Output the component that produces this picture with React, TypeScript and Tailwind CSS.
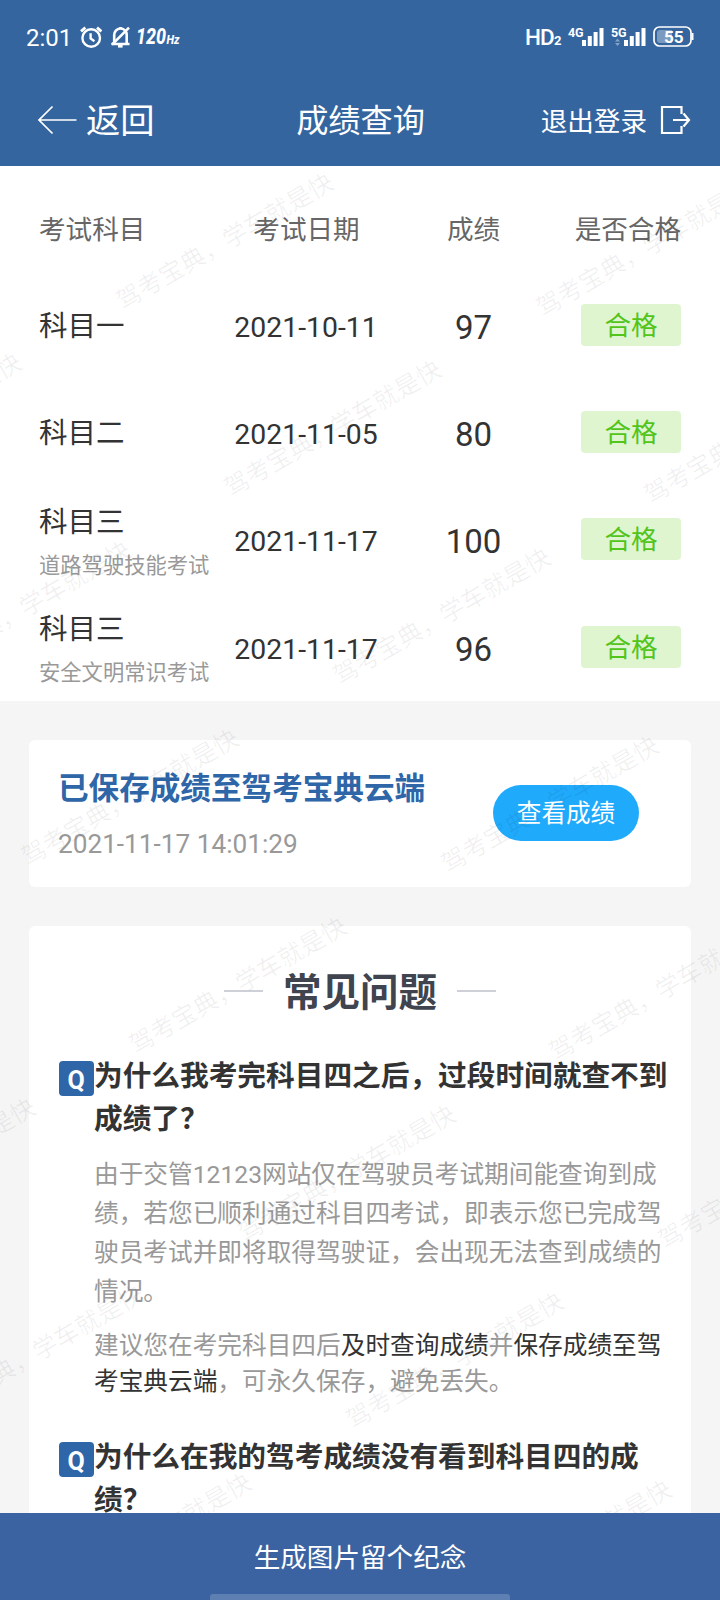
import React from "react";

type Exam = { name: string; note?: string; date: string; score: number };

const exams: Exam[] = [
  { name: "科目一", date: "2021-10-11", score: 97 },
  { name: "科目二", date: "2021-11-05", score: 80 },
  { name: "科目三", note: "道路驾驶技能考试", date: "2021-11-17", score: 100 },
  { name: "科目三", note: "安全文明常识考试", date: "2021-11-17", score: 96 },
];

// Centres of the repeated watermark, relative to the content area below the header.
const watermarks = Array.from({ length: 8 }, (_, m) =>
  [-3, -2, -1, 0, 1].map((n) => ({
    x: 225 + m * 108.3 + n * 420,
    y: 75.5 + m * 187.8 + n * 7,
  })),
)
  .flat()
  .filter((p) => p.x > -120 && p.x < 840);

function StatusBar() {
  return (
    <div className="flex h-[75px] items-center justify-between px-[26px]">
      <div className="flex items-center">
        <span className="w-[53.5px] text-[24px] leading-[28px]">2:01</span>
        <svg className="-mt-[2px] h-[22px] w-[22px]" viewBox="0 0 22 22" fill="none" stroke="#fff" strokeWidth="2.4">
          <circle cx="11.2" cy="12" r="8.8" />
          <path d="M1 5.4 5.4 1.6M21.4 5.4 17 1.6" strokeWidth="2.8" />
          <path d="M10.6 7.2v5.2l3.8 2.8" />
        </svg>
        <svg className="-mt-[2px] ml-[8px] h-[22px] w-[22px]" viewBox="0 0 22 22" fill="none" stroke="#fff" strokeWidth="2.6">
          <path d="M4.2 17V9a6 6 0 0 1 12.5-.5V17M1.5 18h18" />
          <path d="M19 1.600 2 18.600" />
          <path d="M8 20.3h4.600" />
          <path d="M10.5 3V1" />
        </svg>
        <svg
          className="-mt-px ml-[4px] h-[24px] w-[48px] overflow-visible"
          viewBox="0 0 48 24"
          fill="#fff"
          fontStyle="italic"
          fontWeight="800"
        >
          <text x="0" y="18.8" fontSize="21.5" textLength="30" lengthAdjust="spacingAndGlyphs">
            120
          </text>
          <text x="30.5" y="18.800" fontSize="12" textLength="13" lengthAdjust="spacingAndGlyphs">
            Hz
          </text>
        </svg>
      </div>
      <div className="flex items-center">
        <span className="-mt-px text-[22.5px] font-medium leading-[24px] tracking-[-0.8px]">HD</span>
        <span className="mt-[7px] w-[14px] text-[13px] font-bold leading-[12px]">2</span>
        <Signal label="4G" />
        <Signal label="5G" data />
        <Battery />
      </div>
    </div>
  );
}

function Signal({ label, data }: { label: string; data?: boolean }) {
  return (
    <svg className="-mt-px mr-[7px] h-[20px] w-[36px] overflow-visible" viewBox="0 0 36 20">
      <text x="0" y="10" fontSize="12.5" fontWeight="700" fill="#fff" textLength="15.5">
        {label}
      </text>
      {data && <path d="M6.5 11.500 9 14.500H4zM6.500 19 4 16h5z" fill="#fff" opacity=".4" />}
      <path
        d="M14 13h4v6h-4zM19.800 9h4v10h-4zM25.600 5h4v14h-4zM31.500 1h4v18h-4z"
        fill="#fff"
        transform={data ? "translate(-1 0)" : undefined}
      />
    </svg>
  );
}

function Battery() {
  return (
    <svg className="-ml-px -mt-[2px] h-[21px] w-[41px]" viewBox="0 0 41 21">
      <rect x="1" y="1" width="37" height="19" rx="5.500" fill="none" stroke="#fff" strokeWidth="1.700" />
      <path d="M7 4h12v13H7a3 3 0 0 1-3-3V7a3 3 0 0 1 3-3z" fill="#fff" opacity=".35" />
      <path d="M38.500 7h2v7h-2z" fill="#fff" />
      <text x="20.800" y="16.600" textAnchor="middle" fontSize="17.200" fontWeight="700" fill="#fff">
        55
      </text>
    </svg>
  );
}

function NavBar() {
  return (
    <div className="flex h-[91px] items-center pl-[38px] pr-[29px]">
      <div className="flex w-[230px] items-center">
        <svg className="-mt-[2px] h-[30px] w-[40px]" viewBox="0 0 40 30" fill="none" stroke="#fff" strokeWidth="1.700">
          <path d="M38.500 15H1M14.500 1.500 1 15l13.500 13.500" />
        </svg>
        <span className="ml-[8px] text-[34.3px] leading-[40px]">返回</span>
      </div>
      <h1 className="-ml-[1px] w-[187px] pt-[1px] text-center text-[32.2px] leading-[40px]">成绩查询</h1>
      <div className="flex flex-1 items-center justify-end">
        <span className="pt-[2px] text-[26.6px] leading-[32px]">退出登录</span>
        <svg className="-mt-[2px] ml-[13px] h-[30px] w-[31px]" viewBox="0 0 31 30" fill="none" stroke="#fff" strokeWidth="2.200">
          <path d="M21.500 9V2H2v26h19.500v-7" />
          <path d="M13 15h15.500M23.500 8.500 29 15l-5.500 6.500" />
        </svg>
      </div>
    </div>
  );
}

function ResultTable() {
  return (
    <section className="h-[534.5px] shrink-0 bg-white text-[#333]">
      <div className="grid h-[105px] grid-cols-[195px_145px_191px_1fr] items-center px-[39px] pt-[22px] text-[26.6px] leading-[32px] text-[#666]">
        <span>考试科目</span>
        <span className="text-center">考试日期</span>
        <span className="pr-[2px] text-center">成绩</span>
        <span className="-ml-[10px] whitespace-nowrap text-right">是否合格</span>
      </div>
      {exams.map((e, i) => (
        <div key={i} className="grid h-[107.3px] grid-cols-[195px_145px_191px_1fr] items-center px-[39px]">
          <div className={e.note ? "whitespace-nowrap pt-[10px]" : "whitespace-nowrap pt-[5px]"}>
            <div className="text-[28.5px] leading-[42px]">{e.name}</div>
            {e.note && <div className="text-[21.3px] leading-[43px] text-[#999]">{e.note}</div>}
          </div>
          <div className="pr-[1px] pt-[6px] text-center text-[28.4px] leading-[34px]">{e.date}</div>
          <div className="pr-[2px] pt-[6px] text-center text-[33px] leading-[38px]">{e.score}</div>
          <div className="ml-auto h-[42px] w-[100px] rounded-[4px] bg-[#dff5d0] text-center text-[26.6px] leading-[44px] text-[#52c41a]">
            合格
          </div>
        </div>
      ))}
    </section>
  );
}

function SavedCard() {
  return (
    <section className="mx-[29px] mt-[39px] flex h-[147.5px] shrink-0 items-center justify-between rounded-[6px] bg-white pl-[29px] pr-[52px]">
      <div className="pt-[7px]">
        <div className="text-[30.6px] font-bold leading-[46px] text-[#2e66a7]">已保存成绩至驾考宝典云端</div>
        <div className="mt-[9px] text-[26.2px] leading-[46px] text-[#999]">2021-11-17 14:01:29</div>
      </div>
      <button className="h-[56px] w-[146px] rounded-full bg-[#20aafc] text-[24.6px] leading-[58px] text-white">
        查看成绩
      </button>
    </section>
  );
}

function Question({ children }: { children: React.ReactNode }) {
  return (
    <div className="flex">
      <div className="mt-[6px] h-[35px] w-[35px] shrink-0 rounded-[4px] bg-[#2e66a8] pr-[1px] text-center text-[25px] font-bold leading-[40px] text-white">
        Q
      </div>
      <h3 className="text-[28.68px] font-bold leading-[43px] text-[#333]">{children}</h3>
    </div>
  );
}

function Faq() {
  return (
    <section className="mx-[29px] mt-[39px] shrink-0 rounded-t-[6px] bg-white pb-[40px] pl-[30px] pr-[20px]">
      <div className="flex h-[128.5px] items-center justify-center pr-[10px] pt-[2px]">
        <span className="h-[2px] w-[39px] bg-[#cdd0d6]" />
        <h2 className="mx-[20px] pt-[3px] text-[38.5px] font-bold leading-[46px] text-[#40444f]">常见问题</h2>
        <span className="h-[2px] w-[39px] bg-[#cdd0d6]" />
      </div>
      <Question>
        为什么我考完科目四之后，过段时间就查不到
        <br />
        成绩了？
      </Question>
      <div className="whitespace-nowrap pl-[35px] text-[24.68px] text-[#999]">
        <p className="mt-[14px] leading-[39.3px]">
          由于交管12123网站仅在驾驶员考试期间能查询到成
          <br />
          绩，若您已顺利通过科目四考试，即表示您已完成驾
          <br />
          驶员考试并即将取得驾驶证，会出现无法查到成绩的
          <br />
          情况。
        </p>
        <p className="mt-[16px] leading-[36px]">
          建议您在考完科目四后<span className="text-[#333]">及时查询成绩</span>并
          <span className="text-[#333]">保存成绩至驾</span>
          <br />
          <span className="text-[#333]">考宝典云端</span>，可永久保存，避免丢失。
        </p>
      </div>
      <div className="mt-[36px]">
        <Question>
          为什么在我的驾考成绩没有看到科目四的成
          <br />
          绩？
        </Question>
      </div>
    </section>
  );
}

export default function App() {
  return (
    <div
      lang="zh-CN"
      className="flex h-[1600px] w-[720px] flex-col overflow-hidden bg-[#f5f5f5] font-['Roboto','Noto_Sans_CJK_SC',sans-serif]"
    >
      <header className="h-[166px] shrink-0 bg-[#35659f] text-white">
        <StatusBar />
        <NavBar />
      </header>
      <main className="relative flex min-h-0 flex-1 flex-col overflow-hidden">
        <ResultTable />
        <SavedCard />
        <Faq />
        <div aria-hidden="true" className="pointer-events-none absolute inset-0 select-none overflow-hidden">
          {watermarks.map((p, i) => (
            <span
              key={i}
              className="absolute -translate-x-1/2 -translate-y-1/2 -rotate-30 whitespace-nowrap text-[24.6px] leading-[30px] text-[#000]/6"
              style={{ left: p.x, top: p.y }}
            >
              驾考宝典，学车就是快
            </span>
          ))}
        </div>
      </main>
      <footer className="flex h-[87px] shrink-0 flex-col items-center justify-between bg-[#3b63a1] text-white">
        <div className="pt-[29px] text-[26.6px] leading-[32px]">生成图片留个纪念</div>
        <div className="h-[6px] w-[300px] rounded-t-[3px] bg-[#5d7fb2]" />
      </footer>
    </div>
  );
}
